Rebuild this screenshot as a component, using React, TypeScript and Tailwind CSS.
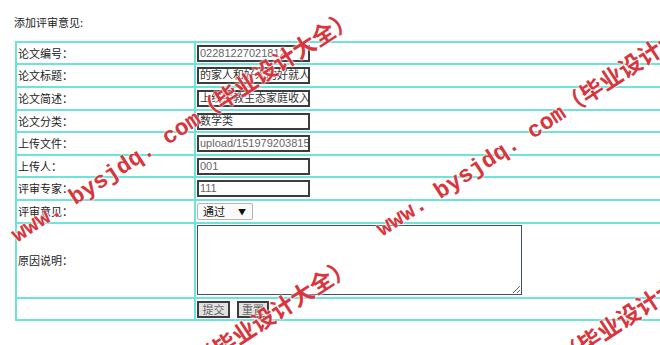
import React from "react";

const rows: { label: string; value?: string; gray?: boolean }[] = [
  { label: "论文编号：", value: "02281227021812", gray: true },
  { label: "论文标题：", value: "的家人和好人的好就人家" },
  { label: "论文简述：", value: "上线宗教生态家庭收入" },
  { label: "论文分类：", value: "数学类" },
  { label: "上传文件：", value: "upload/1519792038154.doc", gray: true },
  { label: "上传人：", value: "001", gray: true },
  { label: "评审专家：", value: "111", gray: true },
];

function Watermark({ x, y }: { x: number; y: number }) {
  return (
    <div
      className="absolute whitespace-nowrap pointer-events-none font-bold text-[23px] leading-none text-[#d8353c] [text-shadow:0_0_2px_#fff,0_0_2px_#fff]"
      style={{
        left: x,
        top: y,
        transform: "translate(-50%, -50%) rotate(-33deg)",
        fontFamily: '"Liberation Mono", "Noto Sans CJK SC", monospace',
      }}
    >
      www. bysjdq. com（毕业设计大全）
    </div>
  );
}

export default function App() {
  const cjk = '"Noto Sans CJK SC", "Liberation Sans", sans-serif';
  const inputFont = '"Liberation Sans", "Noto Sans CJK SC", sans-serif';
  return (
    <div
      className="relative w-[660px] h-[345px] overflow-hidden bg-white text-[#222]"
      style={{ fontFamily: cjk }}
    >
      <div className="pt-[14px] pl-[14px] h-[16px] leading-[16px] text-[11px] box-content">
        添加评审意见:
      </div>
      <div className="mt-[11px] ml-[15px] w-[700px] bg-[#6ee3da] p-[2px]">
        <div className="grid grid-cols-[177px_1fr] grid-rows-[20px_21px_21px_20px_21px_20px_21px_21px_73px_20px] gap-[2px]">
          {rows.map((r) => (
            <React.Fragment key={r.label}>
              <div className="bg-white flex items-center pl-[1px] text-[11px]">{r.label}</div>
              <div className="bg-white flex items-center pl-[1px]">
                <div
                  className={`w-[113px] h-[17px] border-2 border-[#3c3c3c] bg-white flex items-center pl-[1px] overflow-hidden whitespace-nowrap text-[11px] ${
                    r.gray ? "text-[#666]" : "text-[#333]"
                  }`}
                  style={{ fontFamily: inputFont }}
                >
                  {r.value}
                </div>
              </div>
            </React.Fragment>
          ))}
          <div className="bg-white flex items-center pl-[1px] text-[11px]">评审意见：</div>
          <div className="bg-white flex items-center pl-[1px]">
            <div className="w-[56px] h-[17px] border border-[#b5b5b5] rounded-[2px] bg-[#fafafa] flex items-center justify-between pl-[5px] pr-[6px] text-[11px] text-[#111]">
              <span>通过</span>
              <span className="text-[8px]">▼</span>
            </div>
          </div>
          <div className="bg-white flex items-center pl-[1px] text-[11px]">原因说明：</div>
          <div className="bg-white pl-[1px] pt-[1px]">
            <textarea
              className="block w-[325px] h-[70px] border border-[#3b4f72] bg-white outline-none"
              defaultValue=""
            />
          </div>
          <div className="bg-white"></div>
          <div className="bg-white flex items-center pl-[1px] gap-[7px]">
            <div className="w-[33px] h-[17px] border-2 border-[#3c3c3c] bg-[#e2e2e2] flex items-center justify-center text-[11px] text-[#666]">
              提交
            </div>
            <div className="w-[32px] h-[17px] border-2 border-[#3c3c3c] bg-[#e2e2e2] flex items-center justify-center text-[11px] text-[#666]">
              重置
            </div>
          </div>
        </div>
      </div>
      <Watermark x={184} y={128} />
      <Watermark x={549} y={122} />
      <Watermark x={182} y={376} />
      <Watermark x={547} y={372} />
    </div>
  );
}
